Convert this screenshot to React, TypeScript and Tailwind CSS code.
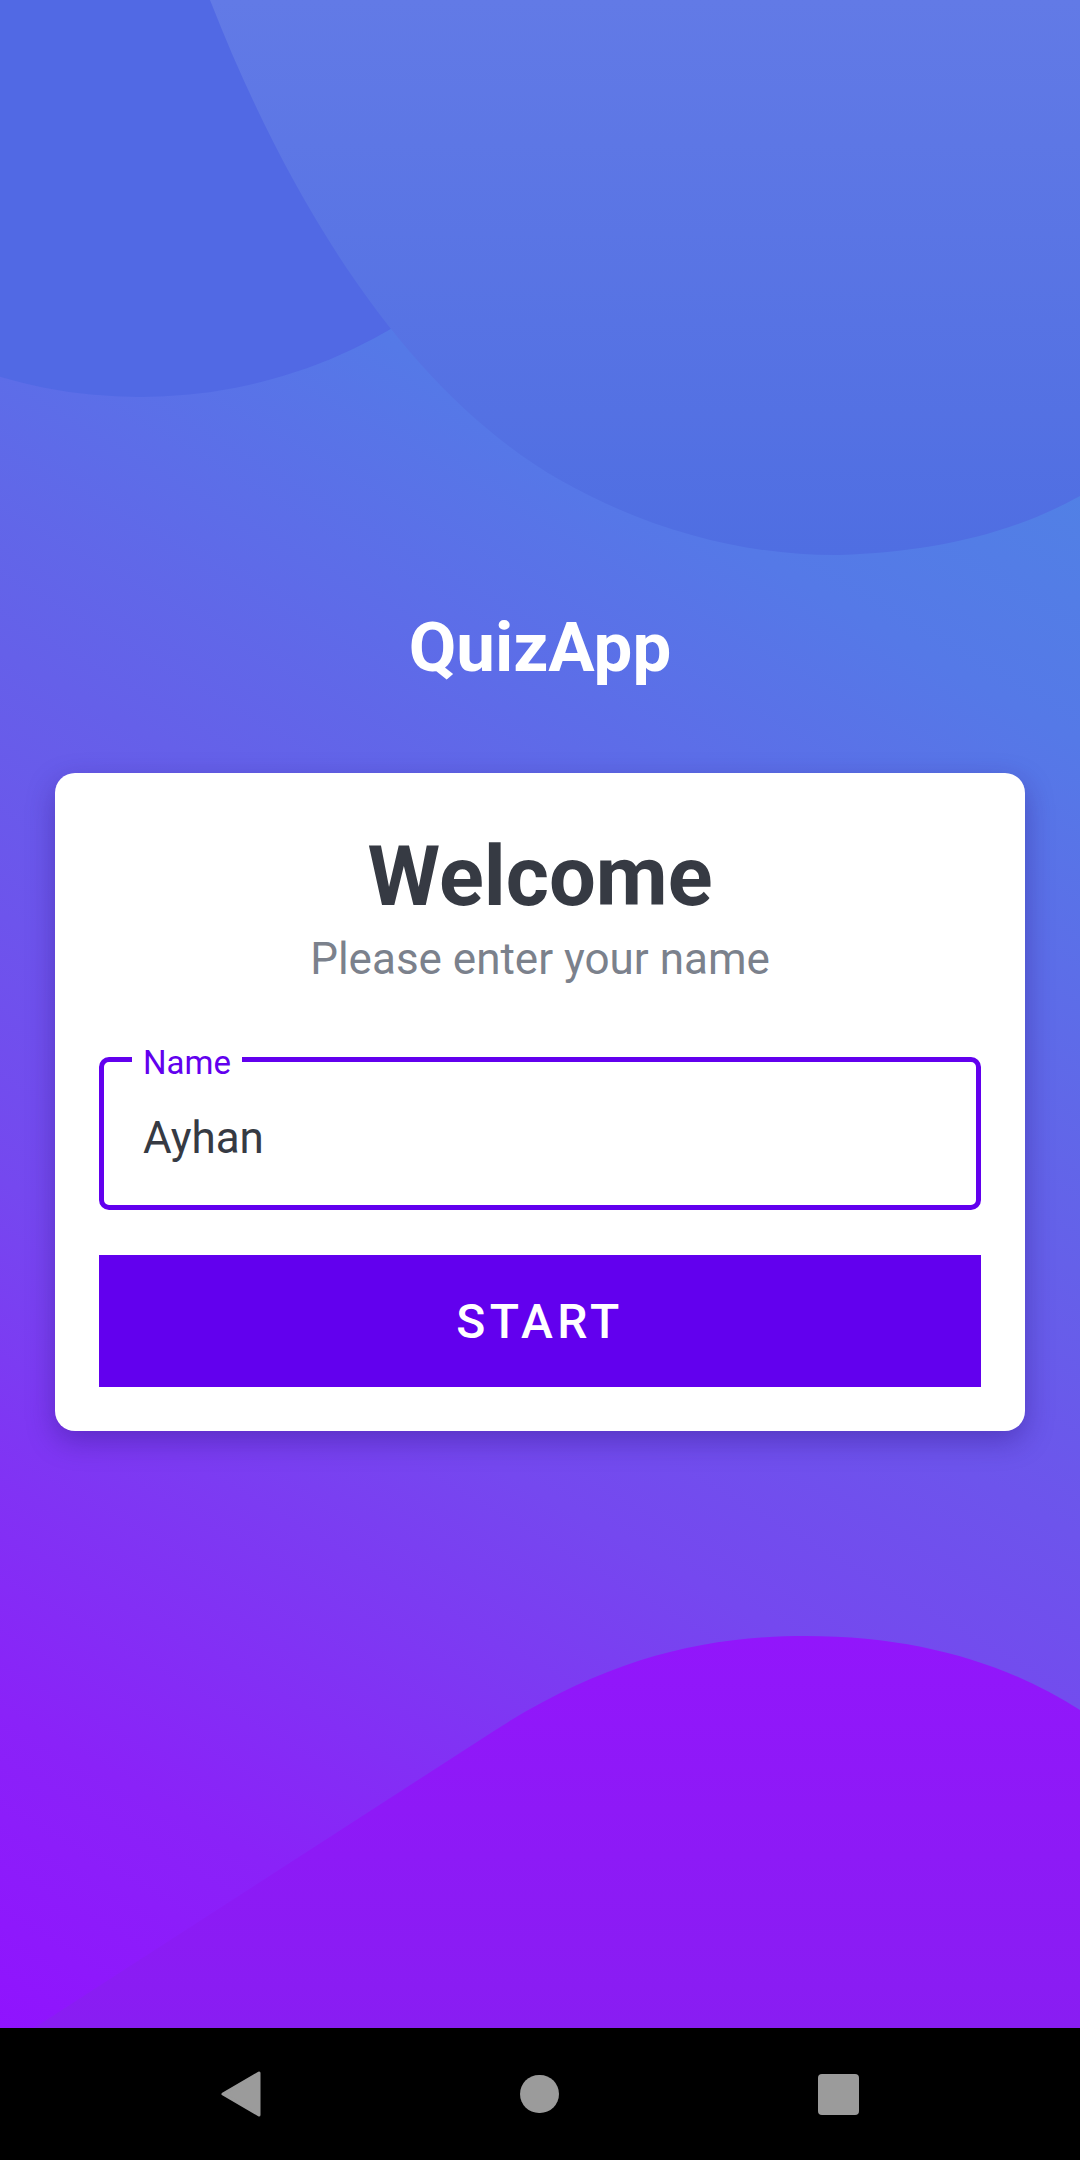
import React from "react";

function Backdrop() {
  return (
    <svg
      className="pointer-events-none absolute inset-0 h-full w-full"
      viewBox="0 0 1080 2028"
      preserveAspectRatio="none"
    >
      <defs>
        <linearGradient id="bigBlob" x1="0" y1="0" x2="0" y2="1">
          <stop offset="0" stopColor="#627ae6" />
          <stop offset="1" stopColor="#4f6ee2" />
        </linearGradient>
        <linearGradient id="lowBlob" x1="0" y1="0" x2="0" y2="1">
          <stop offset="0" stopColor="#9216fb" />
          <stop offset="1" stopColor="#891df2" />
        </linearGradient>
      </defs>
      <circle cx="140" cy="-100" r="497" fill="#5169e4" />
      <path
        d="M210 0 C300 230 420 400 560 480 C660 537 760 556 840 555 C930 552 1010 535 1080 496 L1080 0 Z"
        fill="url(#bigBlob)"
      />
      <path
        d="M34 2028 L480 1740 C600 1660 700 1636 806 1636 C920 1636 1010 1665 1080 1710 L1080 2028 Z"
        fill="url(#lowBlob)"
      />
    </svg>
  );
}

function NavBar() {
  return (
    <div className="flex h-[132px] items-center justify-center bg-black">
      <div className="flex w-[638px] items-center justify-between">
        <svg width="40" height="46" viewBox="0 0 40 46">
          <path d="M38 2 L38 44 L2 23 Z" fill="#9b9b9b" stroke="#9b9b9b" strokeWidth="3" strokeLinejoin="round" />
        </svg>
        <div className="h-[38px] w-[39px] rounded-full bg-[#9b9b9b]" />
        <div className="h-[41px] w-[41px] rounded-[4px] bg-[#9b9b9b]" />
      </div>
    </div>
  );
}

export default function App() {
  return (
    <div className="flex min-h-[2160px] w-[1080px] flex-col font-['Roboto',sans-serif]">
      <main className="relative h-[2028px] overflow-hidden bg-[linear-gradient(210deg,#4a8ee2_0%,#5579e7_28%,#6560e9_48%,#7548ef_68%,#8a22f8_88%,#9013fe_100%)]">
        <Backdrop />
        <div className="relative flex flex-col items-center pt-[613px]">
          <h1 className="text-[69px] font-bold leading-none text-white">QuizApp</h1>

          <section className="mt-[91px] w-[970px] rounded-[20px] bg-white px-[44px] pt-[62px] pb-[44px] shadow-[0_10px_28px_rgba(45,20,130,0.4)]">
            <h2 className="text-center text-[83px] font-bold leading-none text-[#363a43]">Welcome</h2>
            <p className="mt-[19px] text-center text-[44px] leading-none text-[#7b818c]">
              Please enter your name
            </p>

            <div className="relative mt-[76px] h-[153px] rounded-[10px] border-[5px] border-[#6200ee] pl-[39px] pt-[54px]">
              <span className="absolute -top-[16px] left-[28px] bg-white px-[11px] text-[33px] leading-none text-[#6200ee]">
                Name
              </span>
              <div className="text-[44px] leading-none text-[#363a43]">Ayhan</div>
            </div>

            <button className="mt-[45px] flex h-[132px] w-full items-center justify-center bg-[#6200ee] pt-[2px] text-[48px] font-medium leading-none tracking-[0.09em] text-white">
              START
            </button>
          </section>
        </div>
      </main>
      <NavBar />
    </div>
  );
}
